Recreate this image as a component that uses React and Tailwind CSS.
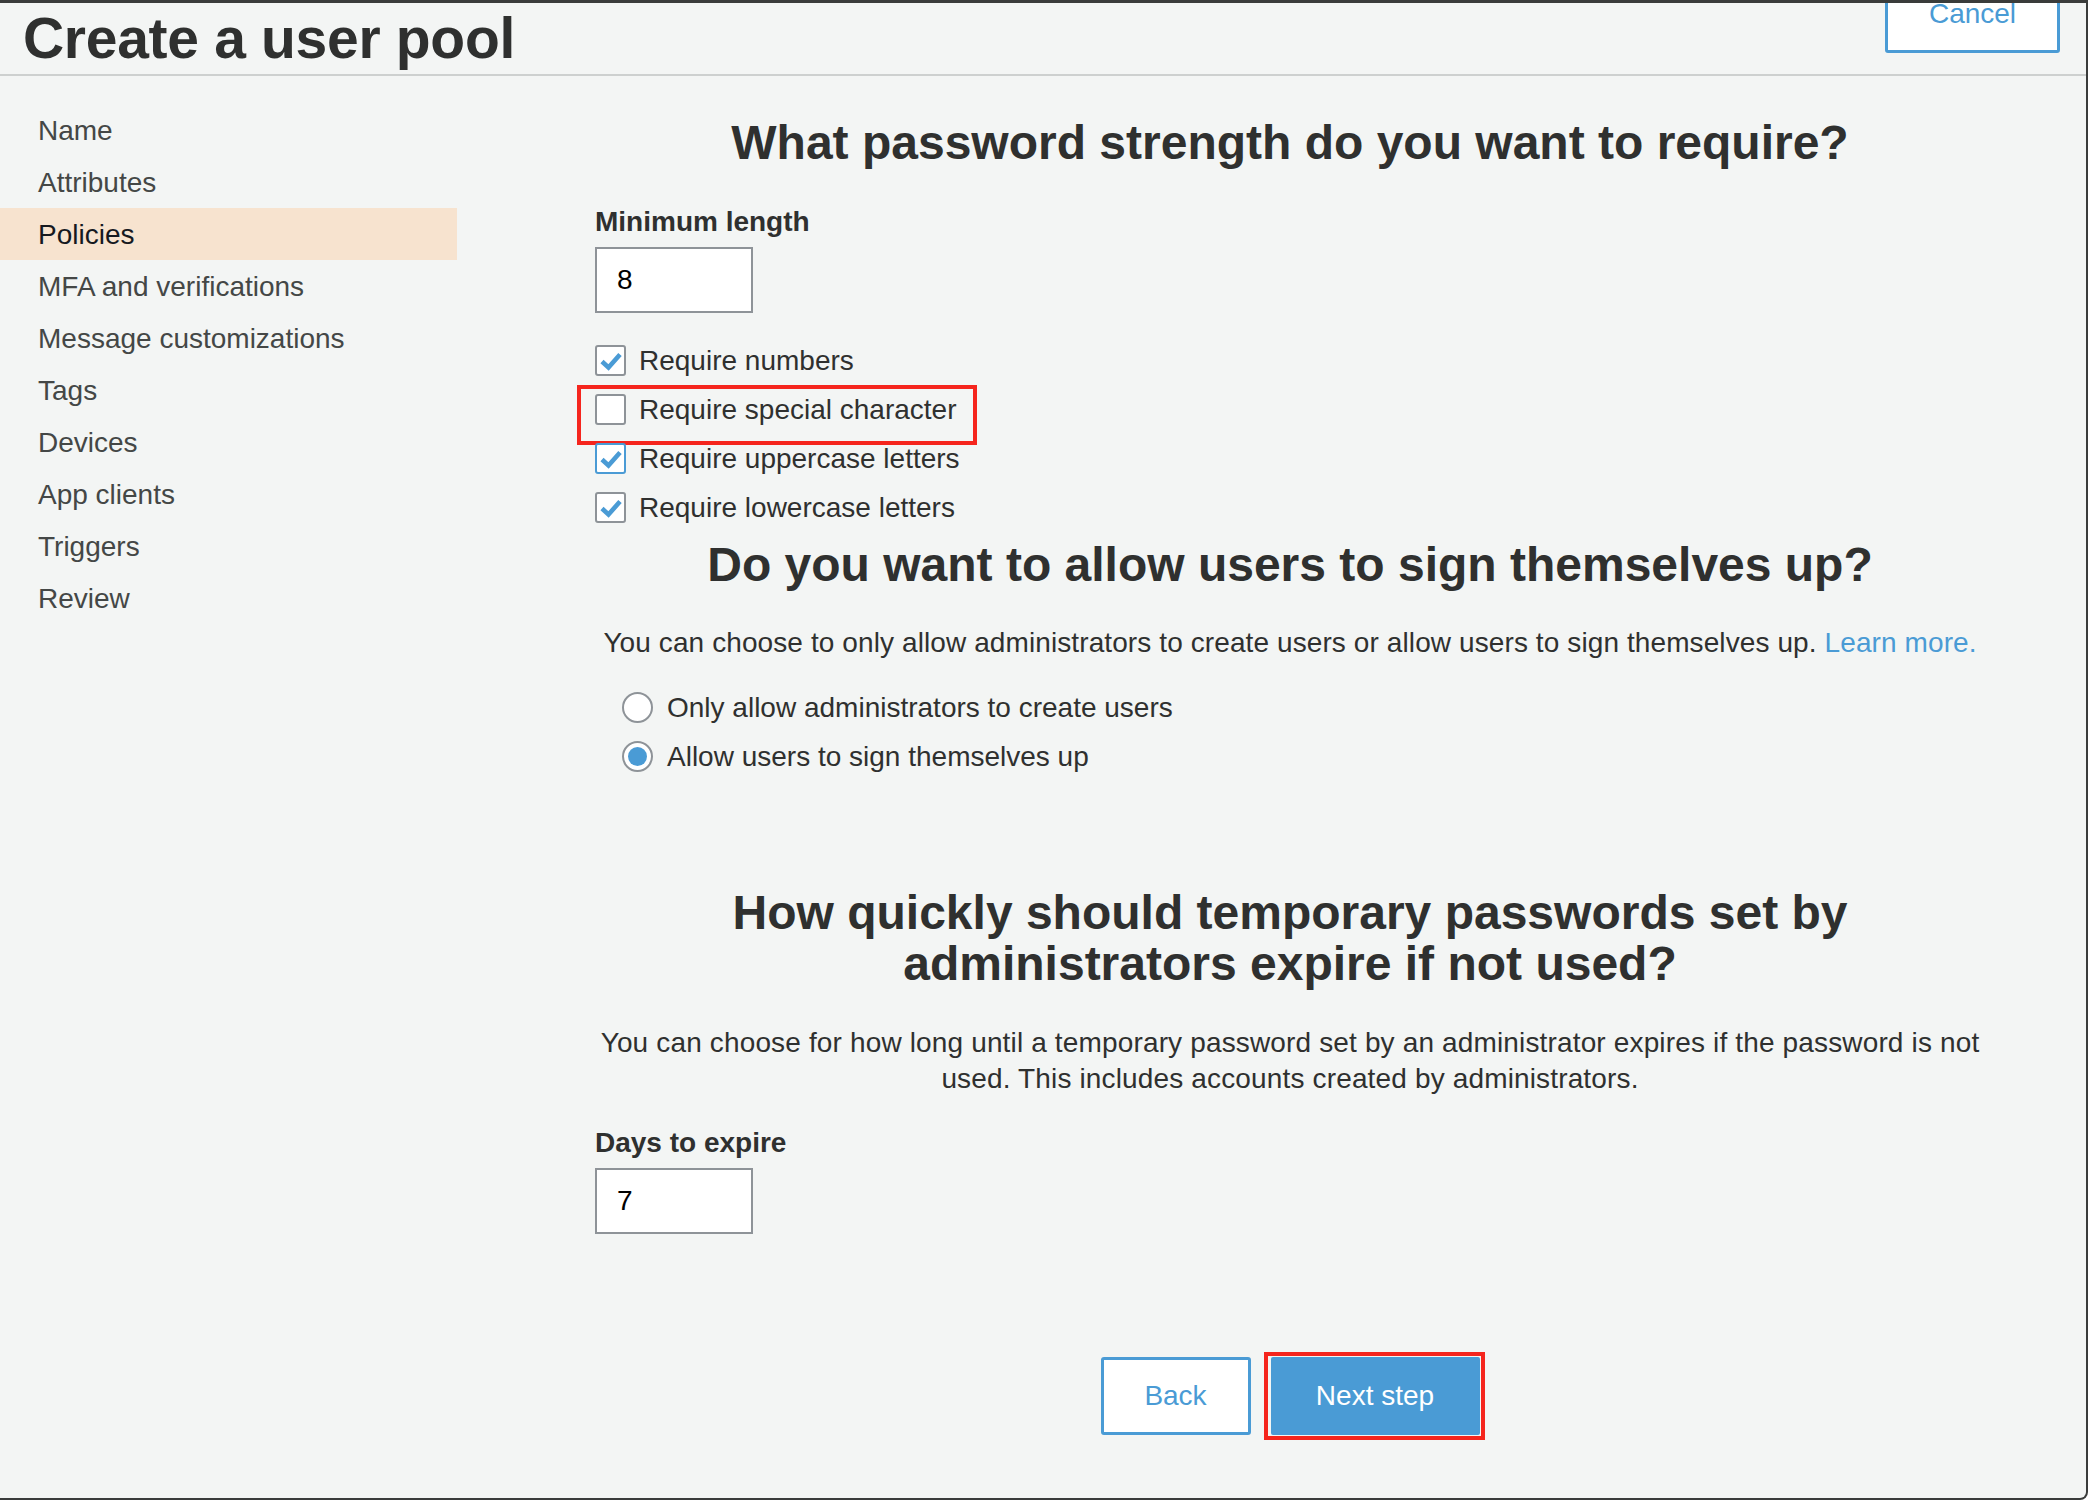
import React from 'react';

const navItems = [
  'Name', 'Attributes', 'Policies', 'MFA and verifications', 'Message customizations',
  'Tags', 'Devices', 'App clients', 'Triggers', 'Review',
];

const checks = [
  { label: 'Require numbers', checked: true },
  { label: 'Require special character', checked: false, marked: true },
  { label: 'Require uppercase letters', checked: true, focused: true },
  { label: 'Require lowercase letters', checked: true },
];

function Checkbox({ checked, focused }) {
  return (
    <span
      className={`w-[31px] h-[31px] shrink-0 bg-white rounded-[3px] border-2 flex items-center justify-center ${
        focused ? 'border-[#4a9bd5]' : 'border-[#8e9398]'
      }`}
    >
      {checked && (
        <svg width="24" height="24" viewBox="0 0 24 24">
          <path d="M3 12.5 L9.5 18.5 L21 5.5" fill="none" stroke="#4a9bd5" strokeWidth="4.6" strokeLinejoin="miter" />
        </svg>
      )}
    </span>
  );
}

function Radio({ checked }) {
  return (
    <span className="w-[31px] h-[31px] shrink-0 rounded-full bg-white border-2 border-[#8e9398] flex items-center justify-center">
      {checked && <span className="w-[19px] h-[19px] rounded-full bg-[#4a9bd5]" />}
    </span>
  );
}

const App = () => {
  return (
    <div className="w-[2090px] h-[1502px] bg-white overflow-hidden" style={{ fontFamily: '"Liberation Sans", Arial, sans-serif' }}>
      <div className="w-[2088px] h-[1500px] bg-[#f3f5f4] border-t-[3px] border-r-2 border-b-2 border-[#3a3c3b] rounded-br-[8px] overflow-hidden flex flex-col">
        {/* header */}
        <div className="h-[73px] shrink-0 border-b-2 border-[#cdd0cf] flex justify-between pl-[23px] pr-[26px]">
          <h1 className="self-center text-[57px] leading-none font-bold text-[#2f302f] tracking-[-0.3px]">Create a user pool</h1>
          <button className="-mt-[28px] w-[175px] h-[78px] bg-white border-[3px] border-[#4a9bd5] rounded-[3px] text-[28px] text-[#4a9bd5]">
            Cancel
          </button>
        </div>

        <div className="flex flex-1">
          {/* sidebar */}
          <nav className="w-[457px] shrink-0 pt-[28px]">
            {navItems.map((item) => (
              <div
                key={item}
                className={`h-[52px] flex items-center pl-[38px] pt-[2px] text-[28px] ${
                  item === 'Policies' ? 'bg-[#f7e3cf] text-[#16191f]' : 'text-[#444746]'
                }`}
              >
                {item}
              </div>
            ))}
          </nav>

          {/* main */}
          <main className="w-[1390px] ml-[138px] pt-[41px] text-[#2f302f]">
            <h2 className="text-center text-[48px] leading-[51px] font-bold">What password strength do you want to require?</h2>

            <label className="block mt-[37px] text-[28px] leading-[34px] font-bold">Minimum length</label>
            <div className="mt-[8px] w-[158px] h-[66px] bg-white border-2 border-[#8e9398] flex items-center pl-[20px] text-[28px] text-black">8</div>

            <div className="mt-[23px] flex flex-col">
              {checks.map((c) => (
                <div key={c.label} className="relative h-[49px] flex items-center gap-[13px] text-[28px]">
                  <Checkbox checked={c.checked} focused={c.focused} />
                  <span>{c.label}</span>
                  {c.marked && (
                    <span className="absolute -left-[18px] top-0 w-[400px] h-[60px] border-4 border-[#f5251d] pointer-events-none" />
                  )}
                </div>
              ))}
            </div>

            <h2 className="mt-[7px] text-center text-[48px] leading-[51px] font-bold">Do you want to allow users to sign themselves up?</h2>

            <p className="mt-[35px] text-center text-[28px] leading-[36px] tracking-[0.1px]">
              You can choose to only allow administrators to create users or allow users to sign themselves up.{' '}
              <a className="text-[#4a9bd5]">Learn more.</a>
            </p>

            <div className="mt-[22px] pl-[27px] flex flex-col">
              <div className="h-[49px] flex items-center gap-[14px] text-[28px]">
                <Radio checked={false} />
                <span>Only allow administrators to create users</span>
              </div>
              <div className="h-[49px] flex items-center gap-[14px] text-[28px]">
                <Radio checked />
                <span>Allow users to sign themselves up</span>
              </div>
            </div>

            <h2 className="mt-[106px] text-center text-[48px] leading-[51px] font-bold">
              How quickly should temporary passwords set by
              <br />
              administrators expire if not used?
            </h2>

            <p className="mt-[36px] text-center text-[28px] leading-[36px] tracking-[0.15px]">
              You can choose for how long until a temporary password set by an administrator expires if the password is not
              <br />
              used. This includes accounts created by administrators.
            </p>

            <label className="block mt-[29px] text-[28px] leading-[34px] font-bold">Days to expire</label>
            <div className="mt-[8px] w-[158px] h-[66px] bg-white border-2 border-[#8e9398] flex items-center pl-[20px] text-[28px] text-black">7</div>

            <div className="mt-[123px] flex justify-center gap-[20px]">
              <button className="w-[150px] h-[78px] bg-white border-[3px] border-[#4a9bd5] rounded-[3px] text-[28px] text-[#4a9bd5]">Back</button>
              <div className="relative">
                <button className="w-[209px] h-[78px] bg-[#4a9bd5] rounded-[2px] text-[28px] text-white">Next step</button>
                <span className="absolute -left-[7px] -top-[5px] w-[221px] h-[88px] border-4 border-[#f5251d] pointer-events-none" />
              </div>
            </div>
          </main>
        </div>
      </div>
    </div>
  );
};

export default App;
